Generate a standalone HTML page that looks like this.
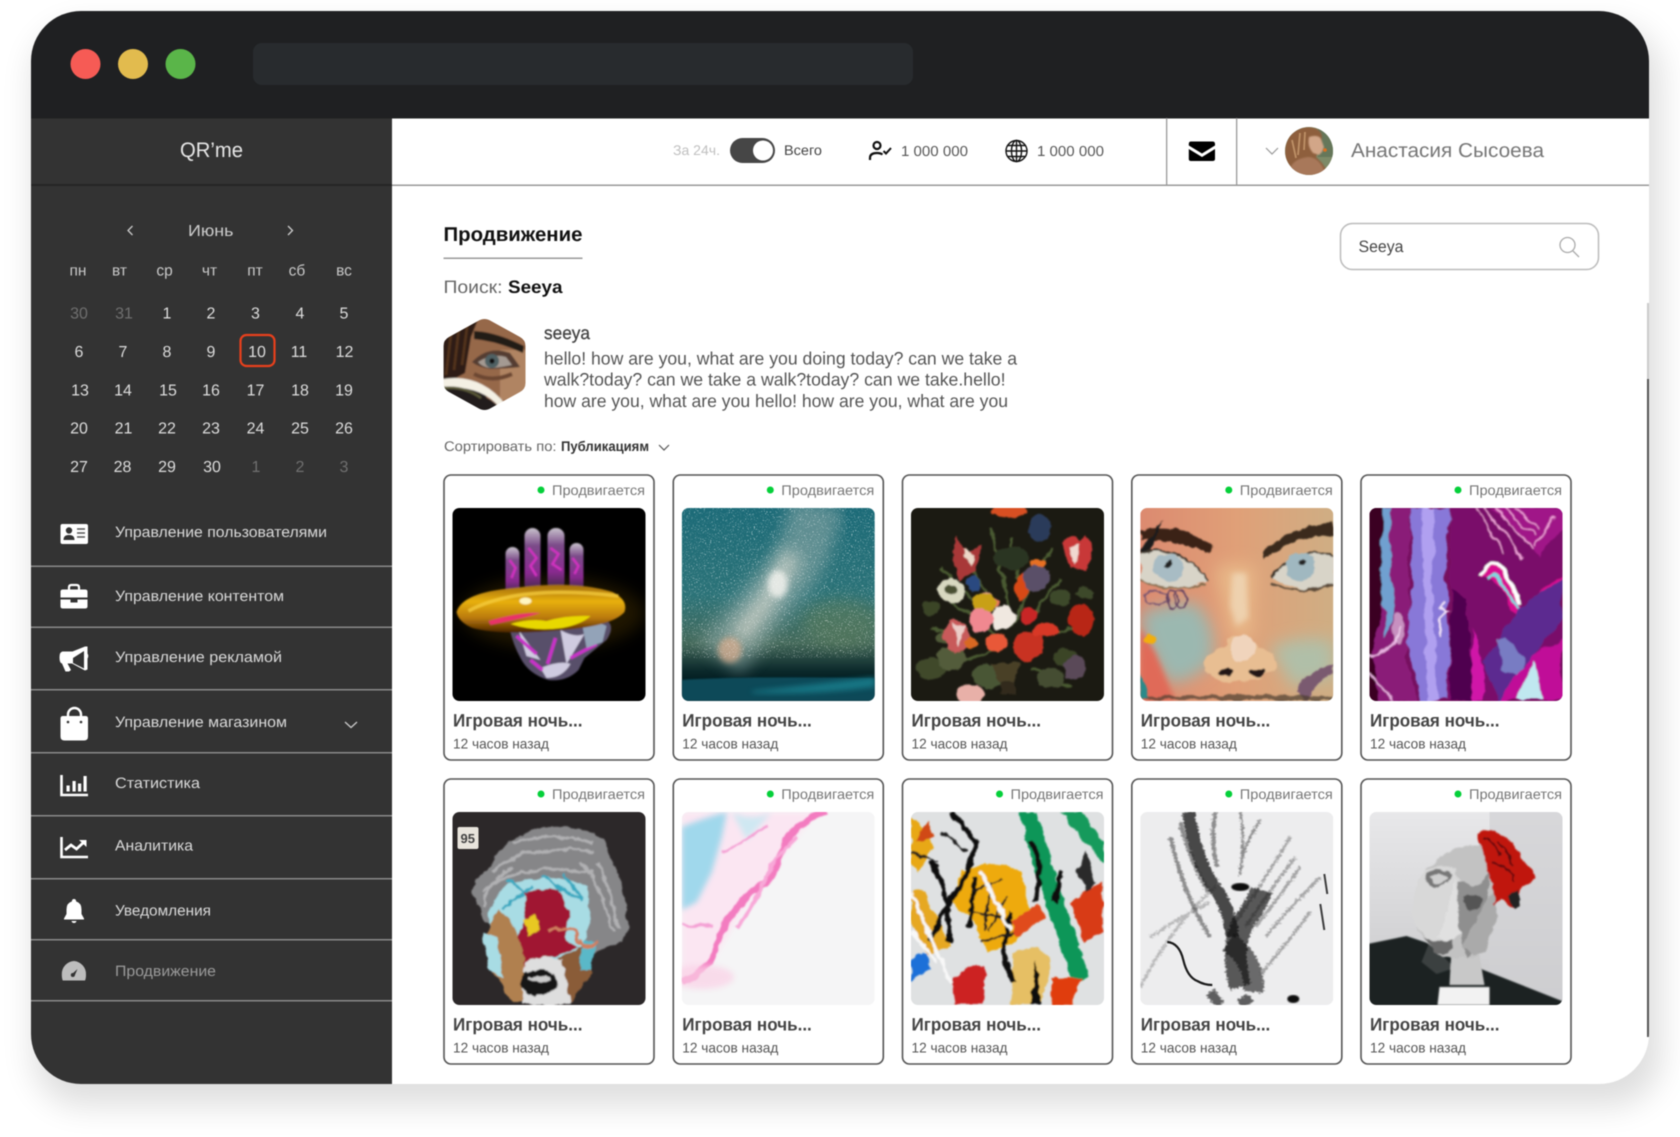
<!DOCTYPE html>
<html lang="ru"><head><meta charset="utf-8"><title>QR'me</title>
<style>html,body{margin:0;padding:0;background:#fff;width:1680px;height:1137px;overflow:hidden}svg{display:block;filter:blur(.45px)}
text{font-family:"Liberation Sans","Noto Sans CJK SC",sans-serif;text-rendering:geometricPrecision}
.d{font-size:16px;fill:#dcdcdc;text-anchor:middle}.m{font-size:16px;fill:#6f6f6f;text-anchor:middle}.w{font-size:15.500px;fill:#c8c8c8;text-anchor:middle}
.n{font-size:15px;fill:#d9d9d9}
.st{font-size:14px;fill:#777}.ti{font-size:18px;font-weight:700;fill:#454545}.su{font-size:14px;fill:#555}
.c{fill:#fff;stroke:#555;stroke-width:1.600}
</style></head><body>
<svg xmlns="http://www.w3.org/2000/svg" width="1680" height="1137" viewBox="0 0 1680 1137">
<defs>
<filter id="sh" x="-10%" y="-10%" width="120%" height="125%"><feGaussianBlur stdDeviation="16"/></filter>
<clipPath id="win"><rect x="31" y="11" width="1618" height="1073" rx="50"/></clipPath>
<clipPath id="im"><rect width="193" height="193" rx="7"/></clipPath>
<clipPath id="hex"><path d="M478 321Q484.500 317 491 321L520 337Q525.500 340 525.500 346V383Q525.500 389 520 392L491 408Q484.500 412 478 408L449 392Q443.500 389 443.500 383V346Q443.500 340 449 337Z"/></clipPath>
<clipPath id="av"><circle cx="1309" cy="151" r="24"/></clipPath>
<filter id="b1" x="-5%" y="-5%" width="110%" height="110%"><feGaussianBlur stdDeviation="0.9"/></filter>
<filter id="b3" x="-20%" y="-20%" width="140%" height="140%"><feGaussianBlur stdDeviation="3"/></filter>
<filter id="b8" x="-30%" y="-30%" width="160%" height="160%"><feGaussianBlur stdDeviation="8"/></filter>
<filter id="stars" x="0" y="0" width="100%" height="100%"><feTurbulence type="fractalNoise" baseFrequency="0.8" numOctaves="2" seed="4"/><feColorMatrix values="0 0 0 0 1 0 0 0 0 1 0 0 0 0 1 5 5 0 0 -5.800"/></filter>
<filter id="wob" x="-5%" y="-5%" width="110%" height="110%"><feTurbulence type="fractalNoise" baseFrequency="0.05" numOctaves="3" seed="7"/><feDisplacementMap in="SourceGraphic" scale="10" xChannelSelector="R" yChannelSelector="G"/><feGaussianBlur stdDeviation=".7"/></filter>
<filter id="wob2" x="-5%" y="-5%" width="110%" height="110%"><feTurbulence type="fractalNoise" baseFrequency="0.09" numOctaves="3" seed="11"/><feDisplacementMap in="SourceGraphic" scale="7" xChannelSelector="R" yChannelSelector="G"/><feGaussianBlur stdDeviation=".7"/></filter>
<filter id="scr" x="-5%" y="-5%" width="110%" height="110%"><feTurbulence type="fractalNoise" baseFrequency="0.35 0.7" numOctaves="2" seed="2"/><feDisplacementMap in="SourceGraphic" scale="6" xChannelSelector="R" yChannelSelector="G"/><feGaussianBlur stdDeviation=".5"/></filter>
<linearGradient id="gold" x1="0" y1="0" x2="0" y2="1"><stop offset="0" stop-color="#a06a08"/><stop offset=".35" stop-color="#e8b010"/><stop offset=".7" stop-color="#b87808"/><stop offset="1" stop-color="#4a2404"/></linearGradient>
<linearGradient id="fing" x1="0" y1="0" x2="0" y2="1"><stop offset="0" stop-color="#c8c2cc"/><stop offset=".28" stop-color="#7a4a88"/><stop offset=".7" stop-color="#8a2a90"/><stop offset="1" stop-color="#3a2a40"/></linearGradient>
<linearGradient id="sky" x1="0" y1="0" x2="0" y2="1"><stop offset="0" stop-color="#1c6b78"/><stop offset=".45" stop-color="#2c7378"/><stop offset=".7" stop-color="#44695a"/><stop offset=".84" stop-color="#0c2a2c"/><stop offset=".88" stop-color="#052024"/><stop offset="1" stop-color="#062830"/></linearGradient>
<linearGradient id="face4" x1="0" y1="0" x2="1" y2="0"><stop offset="0" stop-color="#dc8a70"/><stop offset=".5" stop-color="#e0a078"/><stop offset="1" stop-color="#cfae84"/></linearGradient>
<linearGradient id="bg10" x1="0" y1="0" x2="0" y2="1"><stop offset="0" stop-color="#e8e8ea"/><stop offset="1" stop-color="#c8c8ca"/></linearGradient>
</defs>

<rect x="33" y="26" width="1628" height="1080" rx="50" fill="#000" opacity=".13" filter="url(#sh)"/>
<g clip-path="url(#win)">
<rect x="31" y="11" width="1618" height="1073" fill="#fff"/>
<rect x="31" y="11" width="1618" height="107.500" fill="#1f2022"/>
<rect x="31" y="118.500" width="361" height="966" fill="#333"/>
<rect x="31" y="184" width="361" height="2" fill="#262626"/>
<rect x="392" y="184.500" width="1257" height="1.500" fill="#999"/>
<rect x="1647" y="303" width="2" height="76" fill="#ccc"/>
<rect x="1647" y="379" width="2" height="658" fill="#555"/>
</g>
<circle cx="85.500" cy="64" r="15" fill="#f65b55"/><circle cx="133" cy="64" r="15" fill="#e2bb4e"/><circle cx="180.500" cy="64" r="15" fill="#5ab549"/>
<rect x="253" y="43" width="660" height="42" rx="9" fill="#282b2e"/>

<text x="180" y="157" font-size="21" fill="#e6e6e6" textLength="63" lengthAdjust="spacingAndGlyphs">QR’me</text>
<path d="M132.500 226l-4.500 4.500 4.500 4.500M288 226l4.500 4.500-4.500 4.500" fill="none" stroke="#ccc" stroke-width="1.300"/>
<text x="188" y="236" font-size="16" fill="#ccc" textLength="45.500" lengthAdjust="spacingAndGlyphs">Июнь</text>
<g>
<text class="w" x="78" y="275.500">пн</text><text class="w" x="119.500" y="275.500">вт</text><text class="w" x="164.500" y="275.500">ср</text><text class="w" x="209.500" y="275.500">чт</text><text class="w" x="255" y="275.500">пт</text><text class="w" x="297" y="275.500">сб</text><text class="w" x="344" y="275.500">вс</text>
<text class="m" x="79" y="318.500">30</text><text class="m" x="124" y="318.500">31</text><text class="d" x="167" y="318.500">1</text><text class="d" x="211" y="318.500">2</text><text class="d" x="255.500" y="318.500">3</text><text class="d" x="300" y="318.500">4</text><text class="d" x="344" y="318.500">5</text>
<text class="d" x="79" y="357">6</text><text class="d" x="123" y="357">7</text><text class="d" x="167" y="357">8</text><text class="d" x="211" y="357">9</text><text class="d" x="257" y="357">10</text><text class="d" x="299" y="357">11</text><text class="d" x="344.500" y="357">12</text>
<text class="d" x="80" y="395.500">13</text><text class="d" x="123" y="395.500">14</text><text class="d" x="168" y="395.500">15</text><text class="d" x="211" y="395.500">16</text><text class="d" x="255.500" y="395.500">17</text><text class="d" x="300" y="395.500">18</text><text class="d" x="344" y="395.500">19</text>
<text class="d" x="79" y="433.500">20</text><text class="d" x="123.500" y="433.500">21</text><text class="d" x="167" y="433.500">22</text><text class="d" x="211" y="433.500">23</text><text class="d" x="255.500" y="433.500">24</text><text class="d" x="300" y="433.500">25</text><text class="d" x="344" y="433.500">26</text>
<text class="d" x="79" y="472">27</text><text class="d" x="122.500" y="472">28</text><text class="d" x="167" y="472">29</text><text class="d" x="212" y="472">30</text><text class="m" x="256" y="472">1</text><text class="m" x="300" y="472">2</text><text class="m" x="344" y="472">3</text>
</g>
<rect x="240.500" y="335" width="34" height="31" rx="6" fill="none" stroke="#e8401c" stroke-width="2.200"/>

<!-- menu -->
<g fill="#8a8a8a"><rect x="31" y="565.500" width="361" height="1.500"/><rect x="31" y="626.500" width="361" height="1.500"/><rect x="31" y="689" width="361" height="1.500"/><rect x="31" y="752" width="361" height="1.500"/><rect x="31" y="815" width="361" height="1.500"/><rect x="31" y="878" width="361" height="1.500"/><rect x="31" y="939" width="361" height="1.500"/><rect x="31" y="1000" width="361" height="1.500"/></g>
<text class="n" x="115" y="537" textLength="212" lengthAdjust="spacingAndGlyphs">Управление пользователями</text>
<text class="n" x="115" y="601" textLength="169" lengthAdjust="spacingAndGlyphs">Управление контентом</text>
<text class="n" x="115" y="662" textLength="167" lengthAdjust="spacingAndGlyphs">Управление рекламой</text>
<text class="n" x="115" y="727" textLength="172" lengthAdjust="spacingAndGlyphs">Управление магазином</text>
<text class="n" x="115" y="788" textLength="85" lengthAdjust="spacingAndGlyphs">Статистика</text>
<text class="n" x="115" y="850.500" textLength="78" lengthAdjust="spacingAndGlyphs">Аналитика</text>
<text class="n" x="115" y="915.500" textLength="96" lengthAdjust="spacingAndGlyphs">Уведомления</text>
<text class="n" x="115" y="976" textLength="101" lengthAdjust="spacingAndGlyphs" style="fill:#9a9a9a">Продвижение</text>
<!-- id card -->
<rect x="60.500" y="524" width="27.500" height="20" rx="2" fill="#fff"/>
<circle cx="69" cy="530.500" r="3.200" fill="#333"/><path d="M63.500 540c0-4 2.500-5 5.500-5s5.500 1 5.500 5z" fill="#333"/><path d="M77 529h8M77 533h8M77 537h8" stroke="#555" stroke-width="1.400"/>
<!-- briefcase -->
<path d="M69 590v-2.500q0-2.500 2.500-2.500h5q2.500 0 2.500 2.500v2.500" fill="none" stroke="#fff" stroke-width="2.200"/>
<path d="M63 589.500h22q2.500 0 2.500 2v6h-27v-6q0-2 2.500-2zM60.500 599.500h10v3h7v-3h10v7q0 2-2.500 2H63q-2.500 0-2.500-2z" fill="#fff"/>
<!-- megaphone -->
<path d="M85 646.500l2.500 0v7q1.500 2.500 0 5v11l-2.500 1-13-7-4.500 0 3.500 6.500-2 1.500h-3.500l-3.500-8q-2.500-.5-2.500-6t3-6h10zM84 651l-11 7v5l11 5.500z" fill="#fff" fill-rule="evenodd"/>
<!-- bag -->
<path d="M68 718v-3.500a6.500 6.500 0 0 1 13 0v3.500" fill="none" stroke="#fff" stroke-width="2.400"/>
<path d="M63 716h22.500q2.500 0 2.500 2.500v18q0 4-4 4H64.500q-4 0-4-4v-18Q60.500 716 63 716z" fill="#fff"/><circle cx="68" cy="722" r="1.300" fill="#333"/><circle cx="81" cy="722" r="1.300" fill="#333"/>
<!-- bars -->
<path d="M61.500 775v20h26.500" fill="none" stroke="#fff" stroke-width="2.600"/><path d="M66.500 785.500h3.200v6h-3.200zM72.500 781h3.200v10.500h-3.200zM78 783.500h3.200v8H78zM83.500 776h3.200v15.500h-3.200z" fill="#fff"/>
<!-- line chart -->
<path d="M61.500 837v20h26.500" fill="none" stroke="#fff" stroke-width="2.600"/><path d="M65 850l6-5 5.500 4 7-6.500" fill="none" stroke="#fff" stroke-width="2.800"/><path d="M79 840h7.500v7z" fill="#fff"/>
<!-- bell -->
<path d="M74 899q2 0 2.200 2.500 5.300 1.500 5.300 8v4.500l2.500 4.500v1H64v-1l2.500-4.500v-4.500q0-6.500 5.300-8Q72 899 74 899z" fill="#fff"/><path d="M71.500 921h5q-.5 2-2.500 2t-2.500-2z" fill="#fff"/>
<!-- gauge -->
<path d="M62.800 980.500q-1-2-1-6A13 13 0 0 1 74 961a13 13 0 0 1 12 13.500q0 4-1 6z" fill="#bdbdbd"/><path d="M71.500 974.500l6-5.500-3 7z" fill="#333"/><circle cx="72.800" cy="975" r="2" fill="#333"/>
<path d="M345 722l6 5.500 6-5.500" fill="none" stroke="#ccc" stroke-width="1.300"/>

<!-- header -->
<text x="673" y="155" font-size="14" fill="#c0c0c0" textLength="47" lengthAdjust="spacingAndGlyphs">За 24ч.</text>
<rect x="730" y="138" width="45" height="25" rx="12.500" fill="#464646"/><circle cx="763" cy="150.500" r="10" fill="#fff"/>
<text x="784" y="155" font-size="14" fill="#444" textLength="38" lengthAdjust="spacingAndGlyphs">Всего</text>
<circle cx="877" cy="145.500" r="3.500" fill="none" stroke="#111" stroke-width="2.200"/>
<path d="M870 160v-2q0-5 7-5 3.500 0 5.500 1.500" fill="none" stroke="#111" stroke-width="2.200"/>
<path d="M883.500 151l2.500 2.500 5-5.500" fill="none" stroke="#111" stroke-width="2"/>
<text x="901" y="156" font-size="14.500" fill="#555" textLength="67" lengthAdjust="spacingAndGlyphs">1 000 000</text>
<g fill="none" stroke="#111" stroke-width="1.400"><circle cx="1016.500" cy="151" r="10.500"/><ellipse cx="1016.500" cy="151" rx="5" ry="10.500"/><path d="M1016.500 140.500v21M1006 151h21M1007.500 145.500h18M1007.500 156.500h18"/></g>
<text x="1037" y="156" font-size="14.500" fill="#555" textLength="67" lengthAdjust="spacingAndGlyphs">1 000 000</text>
<rect x="1166" y="118" width="1.300" height="67" fill="#999"/><rect x="1236" y="118" width="1.300" height="67" fill="#999"/>
<path d="M1191 141.500h21.500q2.500 0 2.500 2.500v1.500l-13 8-13.200-8V144q0-2.500 2.200-2.500zM1188.800 149l13.200 8 13-8v10q0 2-2.500 2H1191q-2.200 0-2.200-2z" fill="#000"/>
<path d="M1266 148l6 6 6-6" fill="none" stroke="#999" stroke-width="1.200"/>
<g clip-path="url(#av)">
<rect x="1285" y="127" width="48" height="48" fill="#7d8a68"/>
<rect x="1318" y="127" width="15" height="30" fill="#66775a"/>
<path d="M1285 175v-26q2-20 22-22 13 0 15 9l-2 13-4 8 6 6 8 12z" fill="#8e5f3e" filter="url(#b1)"/>
<path d="M1309 137q9-3 12 2l3 8-2 5-3 3-6-2q-6-7-4-16z" fill="#d2a688" filter="url(#b1)"/>
<path d="M1288 175q2-16 20-18 12 0 18 18z" fill="#a8785a" filter="url(#b1)"/>
<path d="M1292 140l4 18M1300 133l-2 22M1305 132l-1 18" stroke="#bd9066" stroke-width="1.800" fill="none"/>
<circle cx="1325" cy="150" r="1.800" fill="#e07020"/>
</g>
<text x="1351" y="157" font-size="20" fill="#777" textLength="193" lengthAdjust="spacingAndGlyphs">Анастасия Сысоева</text>

<!-- title -->
<text x="443.500" y="241" font-size="20" font-weight="700" fill="#111" textLength="139" lengthAdjust="spacingAndGlyphs">Продвижение</text>
<rect x="443.500" y="257.500" width="139" height="1.500" fill="#999"/>
<text x="443.500" y="293" font-size="18" fill="#666" textLength="59" lengthAdjust="spacingAndGlyphs">Поиск:</text>
<text x="508" y="293" font-size="18" font-weight="700" fill="#111" textLength="54.500" lengthAdjust="spacingAndGlyphs">Seeya</text>
<rect x="1340.500" y="223.500" width="258" height="46" rx="12" fill="#fff" stroke="#bbb" stroke-width="1.500"/>
<text x="1358.500" y="252" font-size="16.500" fill="#444" textLength="45" lengthAdjust="spacingAndGlyphs">Seeya</text>
<circle cx="1567.500" cy="245" r="7.500" fill="none" stroke="#aaa" stroke-width="1.300"/><path d="M1573 251l6 6" stroke="#aaa" stroke-width="1.300"/>

<!-- hex avatar -->
<g clip-path="url(#hex)"><g filter="url(#b1)">
<rect x="443" y="317" width="84" height="95" fill="#96674a"/>
<rect x="500" y="350" width="30" height="50" fill="#b08462"/>
<path d="M443 317h36l-8 20-6 36-22 12z" fill="#2f1c12"/>
<path d="M452 325l-6 50M460 320l-6 50M468 320l-6 45" stroke="#54341f" stroke-width="2.500"/>
<path d="M474 331q22 1 50 15l-1 7q-26-12-49-14z" fill="#231a15"/>
<path d="M472 362q16-17 38-9 6 8 10 14-20 2-30 2-12-2-18-7z" fill="#553c30"/>
<path d="M478 362q14-9 28-5l6 8q-14 3-22 3-8-1-12-6z" fill="#a49a92"/>
<circle cx="492" cy="361" r="7" fill="#4f6064"/><circle cx="492" cy="361" r="2.600" fill="#101010"/>
<path d="M474 374q18 9 38 0" fill="none" stroke="#6c4733" stroke-width="4"/>
<path d="M443 382q32-6 44 16 8 4 12 10l-14 6h-42z" fill="#201a1c"/>
<path d="M443 379q38-6 63 26l-6 3q-18-23-57-20z" fill="#f4f0e4"/>
<path d="M443 388q22-2 38 10" fill="none" stroke="#5a5838" stroke-width="2.500"/>
</g></g>
<text x="544" y="339" font-size="18" stroke="#444" stroke-width=".3" fill="#444" textLength="46" lengthAdjust="spacingAndGlyphs">seeya</text>
<text x="544" y="364.500" font-size="18" fill="#555" textLength="473" lengthAdjust="spacingAndGlyphs">hello! how are you, what are you doing today? can we take a</text>
<text x="544" y="385.500" font-size="18" fill="#555" textLength="461.500" lengthAdjust="spacingAndGlyphs">walk?today? can we take a walk?today? can we take.hello!</text>
<text x="544" y="407" font-size="18" fill="#555" textLength="464" lengthAdjust="spacingAndGlyphs">how are you, what are you hello! how are you, what are you</text>
<text x="444" y="451" font-size="14" fill="#666" textLength="112.500" lengthAdjust="spacingAndGlyphs">Сортировать по:</text>
<text x="561" y="451" font-size="14" font-weight="700" fill="#333" textLength="88" lengthAdjust="spacingAndGlyphs">Публикациям</text>
<path d="M659 445l5 5 5-5" fill="none" stroke="#555" stroke-width="1.200"/>

<!-- CARD 1 -->
<g transform="translate(444 475)"><rect class="c" width="210" height="285" rx="7"/>
<circle cx="97" cy="15" r="3.500" fill="#05d03a"/><text class="st" x="108" y="20" textLength="93" lengthAdjust="spacingAndGlyphs">Продвигается</text>
<g transform="translate(8.500 33)"><g clip-path="url(#im)">
<rect width="193" height="193" fill="#000"/>
<ellipse cx="100" cy="105" rx="92" ry="36" fill="#5a4000" opacity=".35" filter="url(#b8)"/>
<g filter="url(#b1)">
<rect x="53" y="39" width="14" height="48" rx="7" fill="url(#fing)"/><rect x="72" y="20" width="16" height="64" rx="8" fill="url(#fing)"/><rect x="95" y="20" width="17" height="62" rx="8" fill="url(#fing)"/><rect x="117" y="35" width="14" height="48" rx="7" fill="url(#fing)"/>
<path d="M98 40l8 6-6 10 9 6M76 40l8 10-6 8 6 10M120 50l6 8-4 8M57 52l6 8-4 10" stroke="#d030c0" stroke-width="2.500" fill="none"/>
<path d="M56 112h62l14 8 24-6q6 6-2 18l-22 18-6 12q-12 12-30 10-20-6-28-22-10-18-12-38z" fill="#59506a"/>
<path d="M66 122l22 30-14-4zM108 122q14 8 24 4l-18 30zM88 160q20-8 30-4-8 14-24 14z" fill="#cfcbe0"/>
<path d="M64 128l20 18M118 150l26-14M103 130l-8 26M78 152l12 10" stroke="#c830c8" stroke-width="3.500"/>
<path d="M130 118q14-6 24 0l-4 16-16 6z" fill="#93a3b8"/>
<path d="M4 104Q10 84 62 80 120 72 160 84 176 92 172 104 160 118 110 122 50 128 20 120 6 114 4 104z" fill="url(#gold)"/>
<path d="M16 103Q66 76 166 88" stroke="#f8d040" stroke-width="3.500" fill="none" opacity=".7"/>
<ellipse cx="73" cy="93" rx="6" ry="3.500" fill="#fff6c0"/>
<path d="M36 113q30-9 52-8-20 6-50 12z" fill="#e83068"/>
<path d="M58 116q20-6 36-3 20-6 44-5-8 8-28 12-28 4-52-4z" fill="#e8d800"/>
</g></g></g>
<text class="ti" x="9" y="251.700" textLength="129.500" lengthAdjust="spacingAndGlyphs">Игровая ночь...</text><text class="su" x="9" y="273.700" textLength="96" lengthAdjust="spacingAndGlyphs">12 часов назад</text></g>

<!-- CARD 2 -->
<g transform="translate(673.300 475)"><rect class="c" width="210" height="285" rx="7"/>
<circle cx="97" cy="15" r="3.500" fill="#05d03a"/><text class="st" x="108" y="20" textLength="93" lengthAdjust="spacingAndGlyphs">Продвигается</text>
<g transform="translate(8.500 33)"><g clip-path="url(#im)">
<rect width="193" height="193" fill="url(#sky)"/>
<ellipse cx="160" cy="115" rx="40" ry="24" fill="#5a7c5c" opacity=".6" filter="url(#b8)"/>
<path d="M135 -5Q125 50 100 75 70 110 38 150" stroke="#8aa6a4" stroke-width="52" fill="none" opacity=".6" filter="url(#b8)"/>
<path d="M110 45Q95 85 55 130" stroke="#d8d8ce" stroke-width="20" fill="none" opacity=".7" filter="url(#b8)"/>
<ellipse cx="96" cy="76" rx="10" ry="14" fill="#f4f4f0" opacity=".8" filter="url(#b3)"/>
<ellipse cx="48" cy="142" rx="12" ry="13" fill="#e0b090" opacity=".7" filter="url(#b3)"/>
<path d="M0 172q60-4 193-2v23H0z" fill="#0b4a58" filter="url(#b1)"/>
<path d="M70 183q60-6 123-14v10q-60 8-123 6z" fill="#1c8a98" opacity=".7" filter="url(#b3)"/>
<rect width="193" height="150" filter="url(#stars)" opacity=".6"/>
</g></g>
<text class="ti" x="9" y="251.700" textLength="129.500" lengthAdjust="spacingAndGlyphs">Игровая ночь...</text><text class="su" x="9" y="273.700" textLength="96" lengthAdjust="spacingAndGlyphs">12 часов назад</text></g>

<!-- CARD 3 (no status) -->
<g transform="translate(902.500 475)"><rect class="c" width="210" height="285" rx="7"/>
<g transform="translate(8.500 33)"><g clip-path="url(#im)">
<rect width="193" height="193" fill="#1b1a12"/>
<g filter="url(#wob2)">
<path d="M60 60L100 120M140 40L100 120M35 90L90 130M170 120L110 130M90 140L30 160M120 160L160 180M80 20L100 110M30 60L70 100M150 70L120 110M20 120L60 130M100 30L110 90" stroke="#4a5a30" stroke-width="3" fill="none"/>
<ellipse cx="35" cy="130" rx="9" ry="6" fill="#505a38"/><ellipse cx="20" cy="160" rx="16" ry="10" fill="#3f4a2c"/><ellipse cx="78" cy="168" rx="16" ry="12" fill="#4a5636"/><ellipse cx="155" cy="150" rx="12" ry="10" fill="#3a4428"/><ellipse cx="100" cy="50" rx="18" ry="12" fill="#2c3420"/>
<ellipse cx="40" cy="150" rx="14" ry="12" fill="#525c3a"/><ellipse cx="140" cy="170" rx="14" ry="10" fill="#444e30"/><ellipse cx="150" cy="90" rx="10" ry="8" fill="#3e4a2c"/><ellipse cx="20" cy="100" rx="8" ry="8" fill="#3a4428"/><ellipse cx="175" cy="85" rx="9" ry="6" fill="#3e4a2c"/>
<ellipse cx="98" cy="3" rx="18" ry="6" fill="#d85020"/><ellipse cx="128" cy="20" rx="11" ry="14" fill="#2a3a5a"/>
<path d="M45 30l12 14 14-6-6 24-16 10-8-20z" fill="#a83838"/><path d="M52 40l8 18 4-12z" fill="#ecd8c8"/>
<path d="M150 35q10-8 14-8l6 6 6-6 6 14-6 22-16-2z" fill="#c83838"/><path d="M158 40l6 18 6-22z" fill="#f0d8d0"/>
<ellipse cx="127" cy="55" rx="8" ry="4" fill="#e87020" /><ellipse cx="112" cy="78" rx="8" ry="14" fill="#d84818" transform="rotate(15 112 78)"/>
<ellipse cx="40" cy="82" rx="14" ry="12" fill="#d8d8c0"/><ellipse cx="40" cy="82" rx="6" ry="5" fill="#4a5030"/>
<ellipse cx="125" cy="70" rx="13" ry="14" fill="#5a5068"/>
<ellipse cx="74" cy="92" rx="9" ry="9" fill="#f0a090"/><ellipse cx="63" cy="76" rx="7" ry="8" fill="#2a4a80"/>
<ellipse cx="75" cy="95" rx="13" ry="7" fill="#e8785c"/>
<ellipse cx="73" cy="95" rx="12" ry="11" fill="#c8a018"/>
<circle cx="92" cy="110" r="12" fill="#f0e8e0"/><circle cx="70" cy="112" r="12" fill="#f08890"/><ellipse cx="46" cy="128" rx="13" ry="17" fill="#c85a5a" transform="rotate(-10 46 128)"/>
<path d="M42 115l6 26 6-24z" fill="#eccdc8"/>
<circle cx="117" cy="108" r="8" fill="#c82828"/><circle cx="118" cy="138" r="15" fill="#c83020"/><ellipse cx="135" cy="122" rx="13" ry="7" fill="#d83828"/>
<ellipse cx="86" cy="135" rx="12" ry="9" fill="#e85838"/><circle cx="60" cy="135" r="6" fill="#d86820"/>
<ellipse cx="170" cy="112" rx="13" ry="16" fill="#b82818"/><ellipse cx="163" cy="160" rx="10" ry="13" fill="#5a4858"/>
<path d="M80 155h30l-8 18h-14z" fill="#4a4028"/><path d="M90 173h12l4 14h-18z" fill="#33291a"/>
<ellipse cx="60" cy="187" rx="14" ry="11" fill="#e8b0a8"/>
</g></g></g>
<text class="ti" x="9" y="251.700" textLength="129.500" lengthAdjust="spacingAndGlyphs">Игровая ночь...</text><text class="su" x="9" y="273.700" textLength="96" lengthAdjust="spacingAndGlyphs">12 часов назад</text></g>

<!-- CARD 4 -->
<g transform="translate(1131.800 475)"><rect class="c" width="210" height="285" rx="7"/>
<circle cx="97" cy="15" r="3.500" fill="#05d03a"/><text class="st" x="108" y="20" textLength="93" lengthAdjust="spacingAndGlyphs">Продвигается</text>
<g transform="translate(8.500 33)"><g clip-path="url(#im)">
<rect width="193" height="193" fill="url(#face4)"/>
<g filter="url(#b8)">
<path d="M0 105q30-10 55-10 25 25 15 60-20 20-40 20-25-30-30-70z" fill="#9bb8b0"/>
<path d="M130 140q30-15 63-6v35l-40 10z" fill="#b0bfa8"/>
<path d="M75 60q25-8 40 0l-3 70-20 0z" fill="#e8b888"/>
</g>
<path d="M0 120l15 25 20 48H0z" fill="#e06a58" filter="url(#b3)"/>
<path d="M92 65h14l2 45-12 8-6-20z" fill="#f0d8b8" opacity=".8" filter="url(#b3)"/>
<g filter="url(#wob2)">
<path d="M0 22q40-8 72 16l-2 8q-30-14-70-14z" fill="#3a2418"/><path d="M123 45q20-26 70-30v12q-40 0-68 24z" fill="#3a2b1c"/>
<path d="M0 42l23-30-14 34-9 6z" fill="#1a1a1a"/>
<path d="M0 45q40-10 68 28-28 10-50 6-14-4-18-8z" fill="#d8d4c8"/><path d="M0 45q40-10 68 28" fill="none" stroke="#3a3028" stroke-width="2"/>
<ellipse cx="28" cy="60" rx="15" ry="14" fill="#a8bcc4"/><circle cx="28" cy="56" r="3.500" fill="#222"/>
<path d="M0 72q28 14 66 4" fill="none" stroke="#8a7050" stroke-width="2"/>
<path d="M130 70q28-34 63-22v28q-30 12-63-6z" fill="#d8d4c8"/><path d="M130 70q28-34 63-22" fill="none" stroke="#3a3028" stroke-width="2"/>
<ellipse cx="160" cy="58" rx="15" ry="14" fill="#a0b8c0"/><circle cx="162" cy="55" r="3.500" fill="#222"/>
<path d="M130 76q30 12 63 0" fill="none" stroke="#5a4a38" stroke-width="2"/>
<ellipse cx="15" cy="90" rx="12" ry="6" fill="none" stroke="#705070" stroke-width="1.500"/><ellipse cx="32" cy="92" rx="6" ry="9" fill="none" stroke="#604060" stroke-width="1.500"/><ellipse cx="40" cy="92" rx="6" ry="9" fill="none" stroke="#604060" stroke-width="1.500"/>
<circle cx="9" cy="131" r="5.500" fill="#f2ae10"/>
<path d="M62 155q10-18 22-15 6-20 26-8 8 6 6 8 14-2 20 14 2 12-14 12-6 8-22 6-14 4-24 0-10-4-14-17z" fill="#e8be92"/>
<ellipse cx="102" cy="140" rx="12" ry="14" fill="#f0d4bc"/>
<ellipse cx="85" cy="164" rx="8" ry="3.500" fill="#201815"/><ellipse cx="117" cy="164" rx="8" ry="3.500" fill="#201815"/>
<path d="M155 185q10-22 38-28v8q-16 6-26 28z" fill="#7a5a70"/>
<path d="M0 192h193v-3q-90-4-193 0z" fill="#4a3a2c" opacity=".7"/>
<path d="M0 165l8 25-8 3z" fill="#2a8a8a"/>
</g></g></g>
<text class="ti" x="9" y="251.700" textLength="129.500" lengthAdjust="spacingAndGlyphs">Игровая ночь...</text><text class="su" x="9" y="273.700" textLength="96" lengthAdjust="spacingAndGlyphs">12 часов назад</text></g>

<!-- CARD 5 -->
<g transform="translate(1361 475)"><rect class="c" width="210" height="285" rx="7"/>
<circle cx="97" cy="15" r="3.500" fill="#05d03a"/><text class="st" x="108" y="20" textLength="93" lengthAdjust="spacingAndGlyphs">Продвигается</text>
<g transform="translate(8.500 33)"><g clip-path="url(#im)">
<rect width="193" height="193" fill="#76105f"/>
<g filter="url(#wob)">
<rect x="-5" y="-5" width="19" height="200" fill="#3a0420"/>
<path d="M14 0h28l-4 60 4 60-6 30 12 43H8l-4-60 10-40z" fill="#8a1a78"/>
<path d="M14 0l8 0-2 50 6 50-10 30-4-70z" fill="#70a0d0"/>
<path d="M42 0h38l-4 60 4 70 2 63H50l-12-60 4-40z" fill="#8878d8"/>
<path d="M52 0l14 0-4 70 6 123H58z" fill="#b0a0f0" />
<path d="M80 0h113v193H76l6-70z" fill="#7a0a6a"/>
<path d="M82 80l14 10 10 103H80z" fill="#500450"/>
<path d="M104 120l14 50-6 23h-10z" fill="#d018a8"/>
<path d="M120 0q30 20 50 50 10-20 23-30V0z" fill="#a01888"/>
<path d="M114 0l40 50M126 0l38 40M136 0l30 28M185 10l-20 28M105 0l30 45M145 0l25 22" stroke="#f0a0d8" stroke-width="1.500" fill="none"/>
<path d="M112 70q4-20 18-12 14 14 20 38 4 8 20-10 12-14 23-18v20q-16 4-28 24-14 4-24-10-10-26-18-30z" fill="#d81090"/>
<path d="M112 68q6-18 18-10 14 18 20 38" fill="none" stroke="#fff" stroke-width="4"/><path d="M118 72q6-8 12 0 12 24 22 30" fill="none" stroke="#80d8e0" stroke-width="3"/>
<path d="M150 100l43-30v40l-30 40-8 30-25 13-16-40z" fill="#5c2a90"/>
<path d="M125 130q20 0 30 20l-6 20-16-10z" fill="#8090d0" opacity=".8"/>
<path d="M130 193q16-30 40-50l23-10v60z" fill="#c01098"/>
<path d="M145 193l20-40 8 40z" fill="#c0e8f0"/>
<path d="M0 165l25 28M0 148q20 2 30-30" stroke="#e8b0e0" stroke-width="2" fill="none"/>
<path d="M75 95l-4 5 8 3-8 8 0 20" stroke="#f0e0f8" stroke-width="2" fill="none"/>
<ellipse cx="28" cy="120" rx="6" ry="14" fill="#f0e0f0" opacity=".6"/>
</g></g></g>
<text class="ti" x="9" y="251.700" textLength="129.500" lengthAdjust="spacingAndGlyphs">Игровая ночь...</text><text class="su" x="9" y="273.700" textLength="96" lengthAdjust="spacingAndGlyphs">12 часов назад</text></g>

<!-- CARD 6 -->
<g transform="translate(444 779)"><rect class="c" width="210" height="285" rx="7"/>
<circle cx="97" cy="15" r="3.500" fill="#05d03a"/><text class="st" x="108" y="20" textLength="93" lengthAdjust="spacingAndGlyphs">Продвигается</text>
<g transform="translate(8.500 33)"><g clip-path="url(#im)">
<rect width="193" height="193" fill="#2c2829"/>
<rect x="5" y="15" width="21" height="22" rx="2" fill="#e8e4dc"/><text x="8" y="31" font-size="13" font-weight="700" fill="#444">95</text>
<g filter="url(#wob2)">
<path d="M20 80q0-18 15-20 10-30 45-42 30-8 60 4 16 4 14 16 18 30 20 62 4 18-4 30l-28 10-60-10-50-20z" fill="#868688"/>
<path d="M40 60q30-30 100-20M30 80q30-30 110-20M130 50q20 30 30 70M145 50q15 30 20 65M60 30q40-10 80 0M30 95q5-25 30-40" stroke="#bcbcbe" stroke-width="3" fill="none" opacity=".8"/>
<path d="M50 75q45-18 85 0l4 35-8 20-28 50-45 0-20-60-2-20z" fill="#a8dce4"/>
<path d="M55 68l30 20M90 65l40 24M50 95l30-20M110 62l20 25" stroke="#3aa8c0" stroke-width="3"/>
<path d="M72 80l35-4 10 25-4 25 12 10-30 10-25 20-6-40 10-20z" fill="#a01830"/>
<path d="M72 108l10-6 6 15-12 8z" fill="#e8c820"/>
<path d="M47 95l20 30 6 40 20 25H60l-18-30-10-35z" fill="#b08050"/>
<path d="M105 145l30-12 4 28-20 30h-20z" fill="#8a5c38"/>
<path d="M30 120l14 5 6 40-14-10z" fill="#a8dce4"/>
<path d="M130 130l14 0-6 28-10 0z" fill="#5ab8c8"/>
<path d="M72 150q18-8 38-2l8 45H70z" fill="#dedede"/>
<ellipse cx="86" cy="170" rx="18" ry="13" fill="#141414"/><path d="M76 165h22v4H76z" fill="#ccc"/>
<path d="M95 120q30-10 30 5t20 5" stroke="#d08060" stroke-width="3" fill="none"/>
</g></g></g>
<text class="ti" x="9" y="251.700" textLength="129.500" lengthAdjust="spacingAndGlyphs">Игровая ночь...</text><text class="su" x="9" y="273.700" textLength="96" lengthAdjust="spacingAndGlyphs">12 часов назад</text></g>

<!-- CARD 7 -->
<g transform="translate(673.300 779)"><rect class="c" width="210" height="285" rx="7"/>
<circle cx="97" cy="15" r="3.500" fill="#05d03a"/><text class="st" x="108" y="20" textLength="93" lengthAdjust="spacingAndGlyphs">Продвигается</text>
<g transform="translate(8.500 33)"><g clip-path="url(#im)">
<rect width="193" height="193" fill="#f5f5f6"/>
<path d="M0 0h135L95 50 60 100 30 150 0 170z" fill="#fbe6f2" filter="url(#b3)"/>
<path d="M0 15Q25 5 45 0l-5 25-10 35-15 30-15 8z" fill="#a0d8ec" filter="url(#b3)"/>
<path d="M50 0q20 10 40 0l-25 28z" fill="#cfe8f2" filter="url(#b3)"/>
<g filter="url(#wob)" fill="none">
<path d="M145 0Q105 15 100 40 95 65 65 85 40 110 28 150 12 165 0 170" stroke="#f37cc0" stroke-width="7"/>
<path d="M115 25q-15 12-30 40-14 30-30 50" stroke="#f8a8d8" stroke-width="4"/>
<path d="M0 110q20 5 30 5M40 40q25-8 45-28" stroke="#f4a0d4" stroke-width="2.500"/>
</g>
<ellipse cx="20" cy="165" rx="32" ry="12" fill="#fad0e6" opacity=".7" filter="url(#b3)"/>
</g></g>
<text class="ti" x="9" y="251.700" textLength="129.500" lengthAdjust="spacingAndGlyphs">Игровая ночь...</text><text class="su" x="9" y="273.700" textLength="96" lengthAdjust="spacingAndGlyphs">12 часов назад</text></g>

<!-- CARD 8 -->
<g transform="translate(902.500 779)"><rect class="c" width="210" height="285" rx="7"/>
<circle cx="97" cy="15" r="3.500" fill="#05d03a"/><text class="st" x="108" y="20" textLength="93" lengthAdjust="spacingAndGlyphs">Продвигается</text>
<g transform="translate(8.500 33)"><g clip-path="url(#im)">
<rect width="193" height="193" fill="#dfe1e2"/>
<g filter="url(#wob2)">
<path d="M0 5q20 15 22 30L8 60 0 50z" fill="#e8a818"/>
<path d="M50 60q30-15 60 0l10 40-14 30-30 10-14-30-20-20z" fill="#eeaa10"/>
<path d="M0 80q15-8 20 15l20 40-25 8-15-30z" fill="#e6a820"/>
<path d="M102 140q30-12 38 10l-10 43h-30z" fill="#e8b030" opacity=".7"/>
<path d="M108 0l18 0 20 70 18 50 13 45-14 8-24-70-18-55z" fill="#0e9658"/>
<path d="M150 0h20l23 30v22L175 30z" fill="#129a5c"/>
<path d="M40 0l26 30-14 40-20 30-14 30M64 65l-6 50M20 50q20 30 18 80M100 100l-8 40 10 30M120 30l10 20 -6 40M150 60l-6 30" stroke="#0a0a0a" stroke-width="5" fill="none"/>
<path d="M60 80l30-12M60 100l38 6M80 70l-6 50M95 85l-18 35M30 20l25 20M0 40l25 10M70 130l40-10" stroke="#1a1a1a" stroke-width="2" fill="none"/>
<path d="M0 80l40 90M25 150l-25-30M70 60l30 60" stroke="#f8f8f8" stroke-width="4" fill="none"/>
<path d="M0 150q10-10 14-8l6 15-20 14z" fill="#1a70d8"/>
<path d="M40 170q20-25 35-12l-2 35H45z" fill="#cc2020"/>
<path d="M18 10l-15 20 20-5z" fill="#d04818"/>
<path d="M100 110l28-18 6 12-28 22z" fill="#e04c1c"/>
<path d="M160 90l30-20 3 50-20 10z" fill="#d83a18"/>
<path d="M140 165l30 2-10 26h-20z" fill="#e03c10"/>
<path d="M125 150l-6 43h12z" fill="#111"/>
<path d="M165 60l10-20 10 30-8 10z" fill="#2a2a2a"/>
</g></g></g>
<text class="ti" x="9" y="251.700" textLength="129.500" lengthAdjust="spacingAndGlyphs">Игровая ночь...</text><text class="su" x="9" y="273.700" textLength="96" lengthAdjust="spacingAndGlyphs">12 часов назад</text></g>

<!-- CARD 9 -->
<g transform="translate(1131.800 779)"><rect class="c" width="210" height="285" rx="7"/>
<circle cx="97" cy="15" r="3.500" fill="#05d03a"/><text class="st" x="108" y="20" textLength="93" lengthAdjust="spacingAndGlyphs">Продвигается</text>
<g transform="translate(8.500 33)"><g clip-path="url(#im)">
<rect width="193" height="193" fill="#ededee"/>
<g filter="url(#scr)" fill="none" stroke="#111">
<path d="M48 0q8 50 26 75 15 20 18 50" stroke-width="13" opacity=".75"/>
<path d="M75 0q-5 30 2 55M30 25q14 60 40 100M40 10q10 40 28 70" stroke-width="4" opacity=".45"/>
<path d="M100 175q-12-45 8-72 10-14 13-25" stroke-width="22" opacity=".68"/>
<path d="M88 130q28 20 25 50" stroke-width="20" opacity=".6"/>
<path d="M150 25q-30 50-55 85M155 45q-30 40-50 70M170 100q-30 40-50 62M180 65q-30 30-55 60M160 55q-25 35-45 60" stroke-width="3" opacity=".3"/>
<path d="M0 175q30-60 75-100M10 125q30-20 60-35" stroke-width="3" opacity=".22"/>
<path d="M100 0q5 30 0 60M120 8q-20 30-20 55" stroke-width="2.500" opacity=".45"/>
<path d="M70 180l10 13M110 185l-10 8" stroke-width="10" opacity=".65"/>
</g>
<path d="M27 130q12 1 16 18t14 21q7 4 15 4" fill="none" stroke="#1c1c1c" stroke-width="2.200"/>
<ellipse cx="100" cy="75" rx="9" ry="4" fill="#111" filter="url(#b1)"/><ellipse cx="153" cy="187" rx="6" ry="4" fill="#111" filter="url(#b1)"/>
<path d="M184 62l3 20M180 92l4 26" stroke="#111" stroke-width="2" opacity=".8"/>
</g></g>
<text class="ti" x="9" y="251.700" textLength="129.500" lengthAdjust="spacingAndGlyphs">Игровая ночь...</text><text class="su" x="9" y="273.700" textLength="96" lengthAdjust="spacingAndGlyphs">12 часов назад</text></g>

<!-- CARD 10 -->
<g transform="translate(1361 779)"><rect class="c" width="210" height="285" rx="7"/>
<circle cx="97" cy="15" r="3.500" fill="#05d03a"/><text class="st" x="108" y="20" textLength="93" lengthAdjust="spacingAndGlyphs">Продвигается</text>
<g transform="translate(8.500 33)"><g clip-path="url(#im)">
<rect width="193" height="193" fill="url(#bg10)"/>
<path d="M120 0h73v193h-73z" fill="#d0d0d3" opacity=".7"/>
<path d="M-2 132l39-8 30 10 42 22 86 34v15H-2z" fill="#1b2323" filter="url(#b1)"/>
<g filter="url(#b1)">
<path d="M60 130l-8 20 15 12 18-6z" fill="#3a4040"/>
<path d="M82 138l27 0 6 35H80z" fill="#c8c8c8"/>
<path d="M70 175h50v18H68z" fill="#f2f2f2"/>
</g>
<g filter="url(#wob2)">
<path d="M54 58q20-15 30-22 20-4 36-5 12 2 14 20-2 18-4 30-10 20-8 40-8 12-14 22-20 6-38 0-16-12-24-34l4-20q-2-20 4-31z" fill="#c2c2c2"/>
<path d="M54 58q18-6 32-2l4 14-10 30-4 34-16-3-18-26q2-30 12-47z" fill="#d8d8d8"/>
<path d="M88 70q14 6 24 2l8-15-2 60-20 30-10-30z" fill="#8f8f8f"/>
<path d="M56 60q14-6 28 2-6 14-22 14-8-6-6-16z" fill="#777"/><path d="M60 64q10-4 20 2-8 8-16 6z" fill="#cfcfcf"/>
<path d="M92 85q14-4 22 2-4 12-16 12z" fill="#555"/>
<path d="M86 65l-12 50 -6 10 14 6 8-8z" fill="#e0e0e0"/>
<path d="M55 125q18 8 30 2l-6 14-14 0z" fill="#6a6a6a"/>
<path d="M122 82q4-10 8-6l-4 34-12 30-8 2-14-6q14-30 30-54z" fill="#aaa"/>
<path d="M108 22q12-8 22 0 14 6 22 24 12 12 14 20l-14 8-8 22-12-10-6 8-8-38z" fill="#c0140f"/>
<path d="M115 26q10 4 16 18M128 30q10 10 16 24M124 50q12 2 20 18" stroke="#5a0808" stroke-width="2" fill="none"/>
<path d="M140 85l8-8 2 18-6 2z" fill="#222"/>
</g></g></g>
<text class="ti" x="9" y="251.700" textLength="129.500" lengthAdjust="spacingAndGlyphs">Игровая ночь...</text><text class="su" x="9" y="273.700" textLength="96" lengthAdjust="spacingAndGlyphs">12 часов назад</text></g>
</svg>
</body></html>
